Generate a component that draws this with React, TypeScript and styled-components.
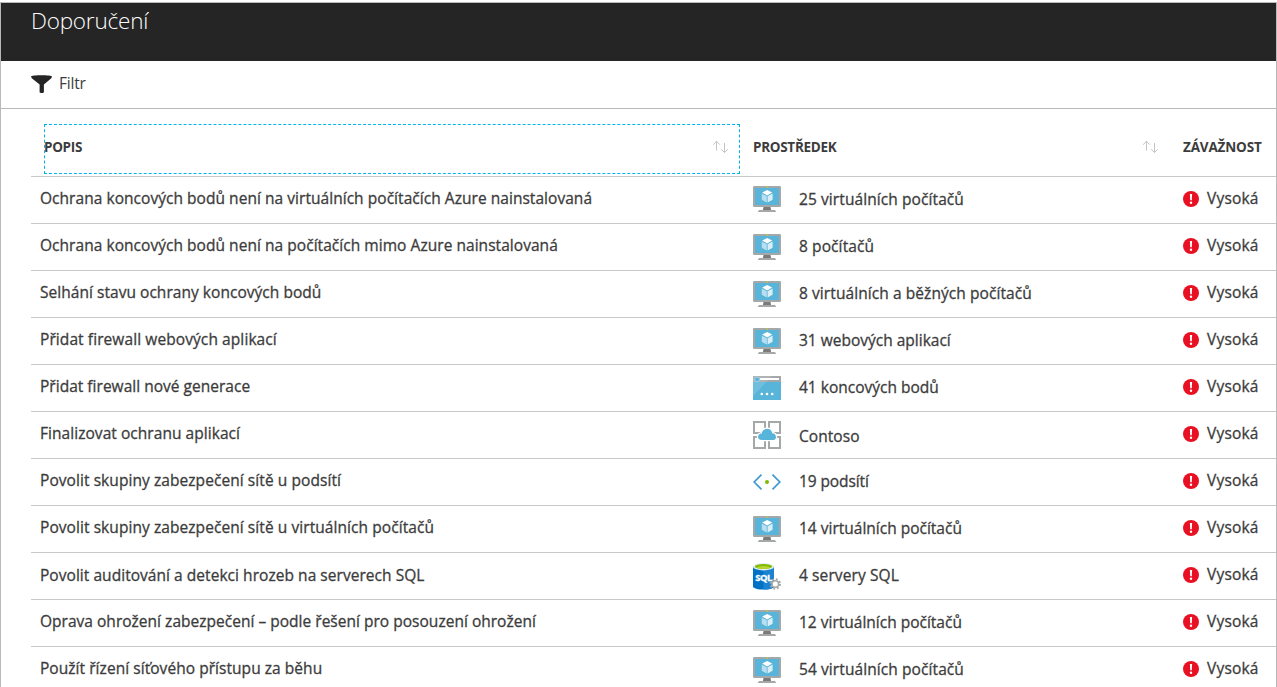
import React from 'react';
import styled, { createGlobalStyle } from 'styled-components';

const GlobalStyle = createGlobalStyle`
  *, *::before, *::after { box-sizing: border-box; }
  body { margin: 0; background: #fff; overflow: hidden; }
  svg { display: block; flex: none; }
`;

const Blade = styled.main`
  width: 1277px;
  height: 685px;
  margin-top: 2px;
  overflow: hidden;
  border: 1px solid #b9b9b9;
  border-bottom: 0;
  background: #fff;
  color: #3c3c3c;
  font-family: 'Segoe UI', 'Open Sans', 'Noto Sans', sans-serif;
`;

const TitleBar = styled.header`
  height: 58px;
  padding: 3px 30px 0;
  background: #252525;
`;

const Title = styled.h1`
  margin: 0;
  color: #fff;
  font-size: 22.5px;
  font-weight: 300;
  line-height: 30px;
  letter-spacing: -0.2px;
`;

const Toolbar = styled.div`
  display: flex;
  align-items: center;
  height: 48px;
  padding-left: 30px;
  border-bottom: 1px solid #b9b9b9;
`;

const FilterButton = styled.button`
  display: flex;
  align-items: center;
  gap: 7px;
  padding: 0 0 2px;
  border: 0;
  background: none;
  color: #3c3c3c;
  font: 400 15.5px/20px 'Segoe UI', 'Open Sans', 'Noto Sans', sans-serif;
  letter-spacing: -0.2px;
`;

const FilterLabel = styled.span`
  padding-bottom: 1px;
`;

const Table = styled.section`
  margin-left: 30px;
`;

const HeaderRow = styled.div`
  display: grid;
  grid-template-columns: 709px 430px 1fr;
  height: 68px;
  padding: 15px 0 0 13px;
  border-bottom: 1px solid #c8c8c8;
`;

const HeaderCell = styled.div<{ $focused?: boolean }>`
  display: flex;
  align-items: center;
  justify-content: space-between;
  width: ${p => (p.$focused ? '696px' : 'auto')};
  height: 50px;
  margin-right: ${p => (p.$focused ? 0 : '25px')};
  padding: 0 ${p => (p.$focused ? '12px' : 0)} 4px 0;
  outline: ${p => (p.$focused ? '1px dashed #00b4f0' : 'none')};
  outline-offset: -1px;
`;

const HeaderLabel = styled.span<{ $spacing: number }>`
  font-size: 13.5px;
  font-weight: 700;
  line-height: 18px;
  letter-spacing: ${p => p.$spacing}px;
  white-space: nowrap;
`;

const Row = styled.div`
  display: grid;
  grid-template-columns: 722px 430px 1fr;
  height: 47px;
  border-bottom: 1px solid #c8c8c8;
`;

const Cell = styled.div<{ $indent?: number }>`
  display: flex;
  align-items: center;
  padding-left: ${p => p.$indent ?? 0}px;
  padding-bottom: 2px;
`;

const IconSlot = styled.span<{ $drop: number }>`
  flex: none;
  width: 46px;
  padding-top: ${p => p.$drop * 2}px;
`;

const Text = styled.span<{ $spacing?: number; $drop?: number }>`
  font-size: 15.5px;
  font-weight: 500;
  line-height: 20px;
  letter-spacing: ${p => p.$spacing ?? 0.05}px;
  padding-top: ${p => (p.$drop ?? 0) * 2}px;
  padding-bottom: 2px;
  white-space: nowrap;
  -webkit-text-stroke: 0.3px currentColor;
`;

const Severity = styled.div`
  display: flex;
  align-items: center;
  gap: 8px;
`;

const Funnel = () => (
  <svg width="21" height="20" viewBox="0 0 21 20" fill="#252525">
    <path d="M0 2.6C0 .7 21 .7 21 2.6L20.3 4.2 12.9 10.6V18.3C12.9 19.2 8.6 19.2 8.6 18.3V10.6L.8 4.2Z" />
  </svg>
);

const SortArrows = () => (
  <svg width="16" height="14" viewBox="0 0 16 14" fill="none" stroke="#c4c4c4">
    <path d="M4.5 1.2V10.5M1.1 4.7 4.5 1.3 7.9 4.7M12.5 3V12.6M9.1 9.2 12.5 12.6 15.9 9.2" />
  </svg>
);

const Monitor = () => (
  <svg width="28" height="28" viewBox="0 0 28 28">
    <path d="M1.2 0H26.8Q28 0 28 1.2V19.8Q28 21 26.8 21H1.2Q0 21 0 19.8V1.2Q0 0 1.2 0Z" fill="#a5a8a9" />
    <path d="M2 2H26V19H2Z" fill="#59b4d9" />
    <path d="M13 .4H15V1.5H13Z" fill="#b8d432" />
    <path d="M10.5 21H17.5L18.2 24.4H9.8Z" fill="#7a7a7a" />
    <path d="M6 24H22L23.3 26H4.7Z" fill="#a5a8a9" />
    <path d="M14.2 4 19.2 6.6 14.2 9.5 9.2 6.6Z" fill="#fff" />
    <path d="M8.8 7.6 13.8 10.3V16.6L8.8 13.8Z" fill="#b9deef" />
    <path d="M19.6 7.6 14.6 10.3V16.6L19.6 13.8Z" fill="#d9eef7" />
  </svg>
);

const Browser = () => (
  <svg width="28" height="28" viewBox="0 0 28 28">
    <path d="M0 2H28V26H0Z" fill="#59b4d9" />
    <path d="M0 2H28V8H0Z" fill="#a5a8a9" />
    <path d="M0 2H19L0 22Z" fill="#fff" opacity=".14" />
    <path d="M7 4H26V6H7Z" fill="#fff" />
    <circle cx="4" cy="5.4" r="2.4" fill="#59b4d9" stroke="#9fd3e9" />
    <g fill="#fff"><circle cx="8.8" cy="20" r="1.3" /><circle cx="14" cy="20" r="1.3" /><circle cx="19.2" cy="20" r="1.3" /></g>
  </svg>
);

const CloudGroup = () => (
  <svg width="28" height="28" viewBox="0 0 28 28">
    <path d="M1 1H12V12H1ZM16 1H27V12H16ZM1 16H12V27H1ZM16 16H27V27H16Z" fill="none" stroke="#a5a8a9" strokeWidth="2" />
    <path d="M8.8 19Q5 18.8 5 15.7 5.2 12.9 8.7 12.5C9.5 6.4 18.2 6.1 19.3 12.2 22.6 12.4 23 15.2 23 16 23 19 20.2 19 20.2 19Z" fill="#59b4d9" stroke="#fff" strokeWidth="2.6" paintOrder="stroke" />
  </svg>
);

const Subnet = () => (
  <svg width="28" height="28" viewBox="0 0 28 28" fill="none" stroke="#3d9bd1" strokeWidth="1.7">
    <path d="M8.5 6.7 1.2 14 8.5 21.3M19.5 6.7 26.8 14 19.5 21.3" />
    <circle cx="14" cy="14" r="2" fill="#7fba00" stroke="none" />
  </svg>
);

const SqlMark = styled.text`
  font: 700 9.5px 'Open Sans', sans-serif;
  fill: #fff;
  stroke: #fff;
  stroke-width: 0.3px;
`;

const SqlServer = () => (
  <svg width="28" height="28" viewBox="0 -1 28 28">
    <path d="M0 3.5V23.5C0 27.6 21 27.6 21 23.5V3.5Z" fill="#0072c6" />
    <path d="M10.5 3.5H21V23.5C21 25.4 16 26.5 10.5 26.6Z" fill="#1b84d2" />
    <ellipse cx="10.5" cy="3.7" rx="10.5" ry="3.7" fill="#e6eef3" />
    <ellipse cx="10.5" cy="3.5" rx="8.6" ry="2.5" fill="#7fba00" />
    <ellipse cx="10.5" cy="4.5" rx="6.5" ry="1.4" fill="#b8d432" />
    <SqlMark x="2.3" y="18" textLength="17">SQL</SqlMark>
    <circle cx="22.3" cy="21" r="4.7" fill="none" stroke="#a5a8a9" strokeWidth="2" strokeDasharray="1.85 1.84" />
    <circle cx="22.3" cy="21" r="3.3" fill="#fff" stroke="#a5a8a9" strokeWidth="1.6" />
  </svg>
);

const Alert = () => (
  <svg width="16" height="16" viewBox="0 0 16 16">
    <circle cx="8" cy="8" r="8" fill="#e81123" />
    <path d="M6.9 3H9.1L8.8 9.3H7.2Z" fill="#fff" />
    <circle cx="8" cy="11.7" r="1.2" fill="#fff" />
  </svg>
);

const icons = { vm: Monitor, web: Browser, group: CloudGroup, subnet: Subnet, sql: SqlServer };

type Item = { name: string; icon: keyof typeof icons; resource: string; ns?: number; rs?: number; nd?: number; rd?: number };

const items: Item[] = [
  { name: 'Ochrana koncových bodů není na virtuálních počítačích Azure nainstalovaná', icon: 'vm', resource: '25 virtuálních počítačů', ns: 0.045, rs: 0.09 },
  { name: 'Ochrana koncových bodů není na počítačích mimo Azure nainstalovaná', icon: 'vm', resource: '8 počítačů', ns: 0.045, rs: 0.1 },
  { name: 'Selhání stavu ochrany koncových bodů', icon: 'vm', resource: '8 virtuálních a běžných počítačů', ns: 0.04, rs: 0.08 },
  { name: 'Přidat firewall webových aplikací', icon: 'vm', resource: '31 webových aplikací', ns: 0.09, rs: 0 },
  { name: 'Přidat firewall nové generace', icon: 'web', resource: '41 koncových bodů', ns: 0.02, rs: 0 },
  { name: 'Finalizovat ochranu aplikací', icon: 'group', resource: 'Contoso', rd: 3 },
  { name: 'Povolit skupiny zabezpečení sítě u podsítí', icon: 'subnet', resource: '19 podsítí', ns: 0.07, rs: -0.1 },
  { name: 'Povolit skupiny zabezpečení sítě u virtuálních počítačů', icon: 'vm', resource: '14 virtuálních počítačů', ns: 0.07, rs: 0 },
  { name: 'Povolit auditování a detekci hrozeb na serverech SQL', icon: 'sql', resource: '4 servery SQL', ns: 0.045, nd: 1, rs: 0.1 },
  { name: 'Oprava ohrožení zabezpečení – podle řešení pro posouzení ohrožení', icon: 'vm', resource: '12 virtuálních počítačů', ns: 0.02, rs: 0 },
  { name: 'Použít řízení síťového přístupu za běhu', icon: 'vm', resource: '54 virtuálních počítačů', ns: 0.05, rs: 0.09 },
];

export default function App() {
  return (
    <>
      <GlobalStyle />
      <Blade>
        <TitleBar><Title>Doporučení</Title></TitleBar>
        <Toolbar>
          <FilterButton><Funnel /><FilterLabel>Filtr</FilterLabel></FilterButton>
        </Toolbar>
        <Table>
          <HeaderRow>
            <HeaderCell $focused><HeaderLabel $spacing={-0.3}>POPIS</HeaderLabel><SortArrows /></HeaderCell>
            <HeaderCell><HeaderLabel $spacing={-0.3}>PROSTŘEDEK</HeaderLabel><SortArrows /></HeaderCell>
            <HeaderCell><HeaderLabel $spacing={-0.15}>ZÁVAŽNOST</HeaderLabel></HeaderCell>
          </HeaderRow>
          {items.map((item, index) => {
            const Icon = icons[item.icon];
            return (
              <Row key={item.name}>
                <Cell $indent={9}><Text $spacing={item.ns} $drop={item.nd}>{item.name}</Text></Cell>
                <Cell>
                  <IconSlot $drop={index > 0 && item.icon === 'vm' ? 2 : 1}><Icon /></IconSlot>
                  <Text $spacing={item.rs} $drop={item.rd ?? 1}>{item.resource}</Text>
                </Cell>
                <Cell><Severity><Alert /><Text $spacing={0.2}>Vysoká</Text></Severity></Cell>
              </Row>
            );
          })}
        </Table>
      </Blade>
    </>
  );
}
